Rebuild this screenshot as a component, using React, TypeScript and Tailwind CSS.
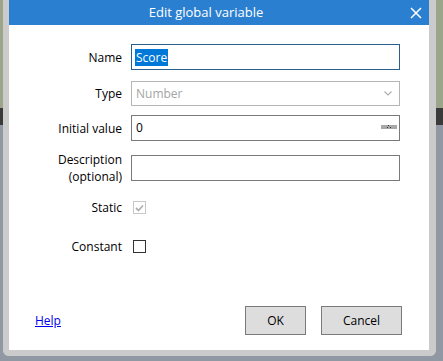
import React from "react";

const font = { fontFamily: '"Open Sans", "Noto Sans", sans-serif' };

function Row({ label, children, className }: { label: React.ReactNode; children: React.ReactNode; className?: string }) {
  return (
    <div className={"flex items-center " + (className ?? "")}>
      <div className="w-[113px] text-right text-[12px] leading-[17px] text-black">{label}</div>
      <div className="ml-[9px] w-[269px]">{children}</div>
    </div>
  );
}

export default function App() {
  return (
    <div
      className="w-[443px] h-[361px] overflow-hidden bg-[linear-gradient(to_bottom,#9aa58a_0px,#9aa58a_108px,#3a3a3a_108px,#3a3a3a_125px,#8f98a3_125px)] pl-[3px]"
      style={font}
    >
      {/* Dialog window */}
      <div className="w-[433px] h-[356px] border-l-[6px] border-r-[7px] border-b-[6px] border-[#cbcbcb] rounded-b-[6px] bg-white flex flex-col">
        {/* Title bar */}
        <div className="h-[25px] bg-[#2b7fd0] flex items-center relative">
          <span className="flex-1 text-center text-white text-[13px] leading-none pr-[26px]">Edit global variable</span>
          <svg className="absolute right-[7px] top-[7px]" width="12" height="12" viewBox="0 0 12 12">
            <path d="M1 1 L11 11 M11 1 L1 11" stroke="#fff" strokeWidth="1.5" />
          </svg>
        </div>

        {/* Form */}
        <div className="flex flex-col pt-[19px]">
          <Row label="Name">
            <div className="h-[26px] border border-[#2b5f8e] flex items-center pl-[3px]">
              <span className="bg-[#0078d7] text-white text-[12px] leading-[17px] px-[1px]">Score</span>
            </div>
          </Row>

          <Row label="Type" className="mt-[11px]">
            <div className="h-[25px] border border-[#b5b5b5] flex items-center pl-[4px] pr-[7px]">
              <span className="flex-1 text-[12px] text-[#a5a5a5]">Number</span>
              <svg width="8" height="5" viewBox="0 0 8 5">
                <path d="M0.5 0.5 L4 4 L7.5 0.5" stroke="#b0b0b0" strokeWidth="1.2" fill="none" />
              </svg>
            </div>
          </Row>

          <Row label="Initial value" className="mt-[9px]">
            <div className="h-[26px] border border-[#7a7a7a] flex items-center pl-[4px] pr-[2px]">
              <span className="flex-1 text-[12px] text-black">0</span>
              <svg width="16" height="4" viewBox="0 0 16 4" className="mb-[2px]">
                <rect x="0" y="0" width="16" height="4" fill="#a8a8a8" />
                <rect x="7" y="0" width="1" height="1" fill="#333" />
                <rect x="9" y="2" width="1" height="1" fill="#333" />
                <rect x="6" y="2" width="1" height="1" fill="#333" />
              </svg>
            </div>
          </Row>

          <Row label={<>Description<br />(optional)</>} className="mt-[10px]">
            <div className="h-[26px] border border-[#7a7a7a]" />
          </Row>

          <Row label="Static" className="mt-[14px]">
            <div className="w-[13px] h-[13px] ml-[2px] border border-[#c8c8c8] flex items-center justify-center">
              <svg width="9" height="8" viewBox="0 0 9 8">
                <path d="M1 4 L3.5 6.5 L8 1.5" stroke="#b0b0b0" strokeWidth="1.8" fill="none" />
              </svg>
            </div>
          </Row>

          <Row label="Constant" className="mt-[22px]">
            <div className="w-[13px] h-[13px] ml-[2px] border border-[#333333] bg-white" />
          </Row>
        </div>

        {/* Footer */}
        <div className="mt-auto mb-[15px] flex items-center pl-[26px] pr-[27px]">
          <a href="#" className="text-[12px] text-[#0000ee] underline">Help</a>
          <div className="ml-auto flex gap-[15px]">
            <button className="w-[61px] h-[29px] bg-[#dddddd] border border-[#7a7a7a] text-[12px] text-black">OK</button>
            <button className="w-[81px] h-[29px] bg-[#dddddd] border border-[#7a7a7a] text-[12px] text-black">Cancel</button>
          </div>
        </div>
      </div>
    </div>
  );
}
